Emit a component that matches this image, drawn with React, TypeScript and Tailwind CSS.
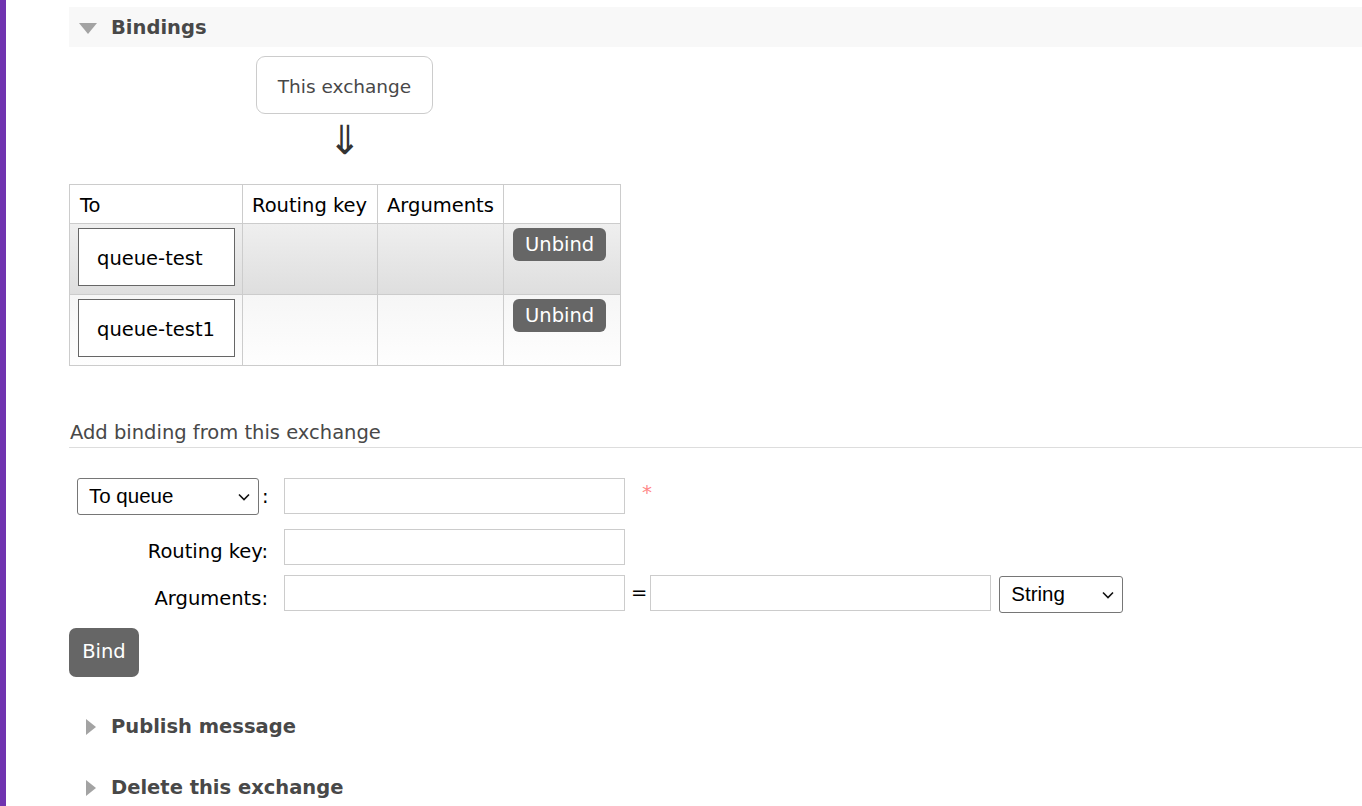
import React from "react";

const font = "font-['DejaVu_Sans',Verdana,sans-serif]";

const Section = ({ title, open }: { title: string; open?: boolean }) => (
  <div className={`flex items-center h-10 pt-[2px] ${open ? "bg-[#f8f8f8]" : ""}`}>
    {open ? (
      <span className="ml-[10px] w-0 h-0 border-l-[9px] border-r-[9px] border-t-[11px] border-l-transparent border-r-transparent border-t-[#a3a3a3]" />
    ) : (
      <span className="ml-[17px] w-0 h-0 border-t-[8px] border-b-[8px] border-l-[10px] border-t-transparent border-b-transparent border-l-[#a3a3a3]" />
    )}
    <span className={`${open ? "ml-[14px]" : "ml-[15px]"} font-bold text-[19.5px] text-[#484848]`}>{title}</span>
  </div>
);

const Select = ({ value, width }: { value: string; width: string }) => (
  <div className={`relative ${width} h-[37px]`}>
    <select className="appearance-none w-full h-full border border-[#767676] rounded-[3px] pl-[11px] text-[20.5px] text-black font-['Liberation_Sans',Arial,sans-serif] bg-white">
      <option>{value}</option>
    </select>
    <svg
      className="absolute right-[9px] top-[15px] pointer-events-none"
      width="12"
      height="8"
      viewBox="0 0 12 8"
    >
      <polyline points="1,1.5 6,6.5 11,1.5" fill="none" stroke="#111" strokeWidth="1.6" />
    </svg>
  </div>
);

const QueueRow = ({ name, first }: { name: string; first?: boolean }) => (
  <tr
    className={
      first
        ? "bg-gradient-to-b from-[#efefef] to-[#dedede]"
        : "bg-gradient-to-b from-[#f6f6f6] to-[#fefefe]"
    }
  >
    <td className="border border-[#ccc] pl-[8px] pr-[7px] pt-[4px] pb-[8px] align-top">
      <div className="h-[58px] border border-[#666] bg-white flex items-center pl-[18px] pt-[3px] text-black">
        {name}
      </div>
    </td>
    <td className="border border-[#ccc]" />
    <td className="border border-[#ccc]" />
    <td className="border border-[#ccc] align-top pl-[9px] pt-[4px]">
      <button className="h-[33px] px-[12px] bg-[#666] text-white rounded-[6px] leading-none">Unbind</button>
    </td>
  </tr>
);

export default function App() {
  return (
    <div className={`flex min-h-[806px] bg-white ${font} text-[19.5px]`}>
      <div className="w-[6px] bg-[#7033b0] shrink-0" />
      <div className="flex-1 pl-[63px] pt-[7px]">
        <Section title="Bindings" open />

        <div className="ml-[187px] mt-[9px] w-[177px] h-[58px] border border-[#ccc] rounded-[9px] flex items-center justify-center pt-[3px] text-[18.5px] text-[#484848]">
          This exchange
        </div>
        <div className="ml-[187px] w-[177px] h-[70px] text-center text-[40px] leading-[52px] text-[#333]">⇓</div>

        <table className="border-collapse text-black">
          <thead>
            <tr className="h-[39px] text-left">
              <th className="w-[173px] border border-[#ccc] font-normal pl-[10px] pt-[4px]">To</th>
              <th className="w-[135px] border border-[#ccc] font-normal pl-[9px] pt-[4px]">Routing key</th>
              <th className="w-[126px] border border-[#ccc] font-normal pl-[9px] pt-[4px]">Arguments</th>
              <th className="w-[117px] border border-[#ccc] font-normal" />
            </tr>
          </thead>
          <tbody>
            <QueueRow name="queue-test" first />
            <QueueRow name="queue-test1" />
          </tbody>
        </table>

        <div className="mt-[54px] pl-[1px] pb-[1px] leading-[26px] border-b border-[#ddd] text-[#484848]">
          Add binding from this exchange
        </div>

        <div className="mt-[30px] grid grid-cols-[199px_341px_auto] gap-x-[16px] items-start text-black">
          <div className="flex items-center h-[37px]">
            <div className="ml-[8px]">
              <Select value="To queue" width="w-[182px]" />
            </div>
            <span className="ml-[3px]">:</span>
          </div>
          <input className="h-[36px] border border-[#ccc]" />
          <span className="ml-[1px] mt-[2px] text-[#f88] text-[20px] leading-[24px]">*</span>

          <div className="text-right mt-[14px] pt-[8px]">Routing key:</div>
          <input className="h-[36px] border border-[#ccc] mt-[14px]" />
          <span />

          <div className="text-right mt-[9px] pt-[9px]">Arguments:</div>
          <input className="h-[36px] border border-[#ccc] mt-[9px]" />
          <div className="flex items-start mt-[9px] -ml-[16px]">
            <span className="ml-[6px] mr-[3px] leading-[36px]">=</span>
            <input className="w-[341px] h-[36px] border border-[#ccc]" />
            <div className="ml-[8px] mt-[1px]">
              <Select value="String" width="w-[124px]" />
            </div>
          </div>
        </div>

        <button className="mt-[14px] w-[70px] h-[49px] bg-[#666] text-white rounded-[7px]">Bind</button>

        <div className="mt-[29px]">
          <Section title="Publish message" />
        </div>
        <div className="mt-[21px]">
          <Section title="Delete this exchange" />
        </div>
      </div>
    </div>
  );
}
